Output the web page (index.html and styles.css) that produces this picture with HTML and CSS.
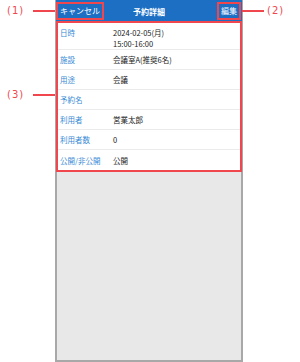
FILE: index.html
```html
<!DOCTYPE html>
<html lang="ja">
<head>
<meta charset="utf-8">
<link rel="stylesheet" href="styles.css">
</head>
<body>
<div class="stage">
  <div class="phone">
    <header class="bar">
      <span class="btn btn-left mark">キャンセル</span>
      <span class="title">予約詳細</span>
      <span class="btn btn-right mark">編集</span>
    </header>
    <div class="list">
      <div class="row row-tall"><span class="label">日時</span><span class="value">2024-02-05(月)<br>15:00-16:00</span></div>
      <div class="row"><span class="label">施設</span><span class="value">会議室A(推奨6名)</span></div>
      <div class="row"><span class="label">用途</span><span class="value">会議</span></div>
      <div class="row"><span class="label">予約名</span><span class="value"></span></div>
      <div class="row"><span class="label">利用者</span><span class="value">営業太郎</span></div>
      <div class="row"><span class="label">利用者数</span><span class="value">0</span></div>
      <div class="row"><span class="label">公開/非公開</span><span class="value">公開</span></div>
    </div>
    <div class="rest"></div>
  </div>
  <div class="note note-1"><span class="note-text">(1)</span><span class="note-line"></span></div>
  <div class="note note-2"><span class="note-line"></span><span class="note-text">(2)</span></div>
  <div class="note note-3"><span class="note-text">(3)</span><span class="note-line"></span></div>
</div>
</body>
</html>
```

FILE: styles.css
```css
html, body {
  margin: 0;
  padding: 0;
  background: #ffffff;
}
body {
  font-family: "Noto Sans CJK JP", "Liberation Sans", sans-serif;
}
.stage {
  position: relative;
  width: 300px;
  height: 362px;
  overflow: hidden;
}
.phone {
  margin-left: 55px;
  width: 188px;
  height: 362px;
  box-sizing: border-box;
  border: 2px solid #a8a8a8;
  border-top: 0;
  background: #e8e8e8;
  display: flex;
  flex-direction: column;
}
.bar {
  height: 22px;
  flex: none;
  background: #1d6fc4;
  display: grid;
  grid-template-columns: 1fr auto 1fr;
  align-items: center;
  color: #ffffff;
  font-size: 8px;
  margin: 0 -1px;
}
.btn {
  line-height: 14px;
  padding: 0 2px;
}
.btn-left {
  justify-self: start;
  margin-left: 2px;
}
.btn-right {
  justify-self: end;
  margin-right: 3px;
}
.mark {
  outline: 2px solid #f0474f;
  outline-offset: 0;
}
.title {
  font-weight: bold;
  font-size: 8px;
}
.list {
  background: #ffffff;
  outline: 2px solid #f0474f;
  outline-offset: -1px;
  flex: none;
}
.row {
  height: 20px;
  box-sizing: border-box;
  border-bottom: 1px solid #ebebeb;
  display: flex;
  align-items: center;
  padding-left: 3px;
  font-size: 7.5px;
}
.row:last-child {
  border-bottom: 0;
  height: 21px;
}
.row-tall {
  height: 28px;
  align-items: flex-start;
  padding-top: 5px;
}
.label {
  width: 53px;
  flex: none;
  color: #3a8bd6;
}
.value {
  color: #1a1a1a;
  line-height: 11px;
}
.rest {
  flex: 1;
}
.note {
  position: absolute;
  display: flex;
  align-items: center;
  color: #f0474f;
  font-family: "DejaVu Sans", "Liberation Sans", sans-serif;
  font-size: 10px;
  letter-spacing: 1px;
}
.note-line {
  display: block;
  width: 22px;
  height: 2px;
  background: #f0474f;
}
.note-1 {
  left: 7px;
  top: 5px;
  gap: 9px;
}
.note-2 {
  left: 242px;
  top: 5px;
  gap: 3px;
}
.note-3 {
  left: 7px;
  top: 89px;
  gap: 9px;
}
```
